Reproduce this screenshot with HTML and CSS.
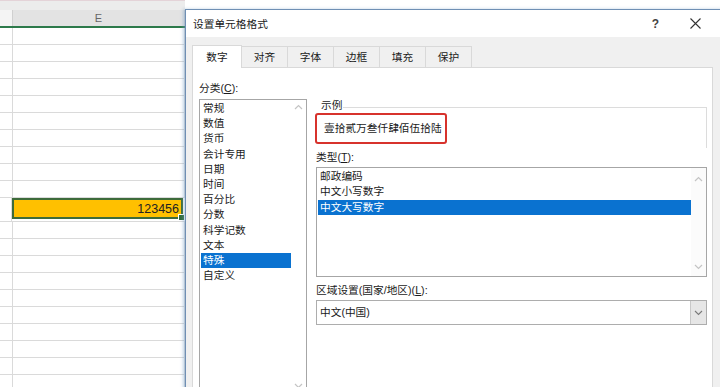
FILE: index.html
```html
<!DOCTYPE html>
<html lang="zh-CN">
<head>
  <meta charset="utf-8" />
  <title>设置单元格格式</title>
  <link rel="stylesheet" href="styles.css">
</head>
<body>
  <div id="screen">
    <!-- sheet behind the dialog -->
    <div class="sheet">
      <div class="ribbon-edge"></div>
      <div class="col-head">
        <div class="head-d"></div>
        <div class="head-e">E</div>
      </div>
      <div class="row"></div><div class="row"></div><div class="row"></div><div class="row"></div><div class="row"></div>
      <div class="row"></div><div class="row"></div><div class="row"></div><div class="row"></div><div class="row"></div>
      <div class="row row-active">
        <div class="cell-d"></div>
        <div class="cell-sel">123456<span class="fill-handle"></span></div>
      </div>
      <div class="row"></div><div class="row"></div><div class="row"></div><div class="row"></div><div class="row"></div>
      <div class="row"></div><div class="row"></div><div class="row"></div><div class="row"></div><div class="row"></div>
    </div>

    <!-- format cells dialog -->
    <div class="dialog">
      <div class="titlebar">
        <span class="title">设置单元格格式</span>
        <span class="help">?</span>
        <svg class="close" width="11" height="11" viewBox="0 0 11 11"><path d="M0.5 0.5 L10.5 10.5 M10.5 0.5 L0.5 10.5" stroke="#333" stroke-width="1.1" fill="none"/></svg>
      </div>
      <div class="dialog-body">
        <ul class="tabs">
          <li class="tab active">数字</li>
          <li class="tab">对齐</li>
          <li class="tab">字体</li>
          <li class="tab">边框</li>
          <li class="tab">填充</li>
          <li class="tab">保护</li>
        </ul>
        <div class="panel">
          <div class="col-left">
            <div class="label">分类(<u>C</u>):</div>
            <div class="listbox cat-list">
              <ul class="items">
                <li>常规</li>
                <li>数值</li>
                <li>货币</li>
                <li>会计专用</li>
                <li>日期</li>
                <li>时间</li>
                <li>百分比</li>
                <li>分数</li>
                <li>科学记数</li>
                <li>文本</li>
                <li class="selected">特殊</li>
                <li>自定义</li>
              </ul>
              <div class="scroll">
                <svg width="9" height="6" viewBox="0 0 9 6"><polyline points="1,5 4.5,1.5 8,5" stroke="#c4c4c4" stroke-width="1.2" fill="none"/></svg>
                <svg width="9" height="6" viewBox="0 0 9 6"><polyline points="1,1 4.5,4.5 8,1" stroke="#c4c4c4" stroke-width="1.2" fill="none"/></svg>
              </div>
            </div>
          </div>
          <div class="col-right">
            <div class="sample">
              <div class="legend">示例</div>
              <div class="sample-box">壹拾贰万叁仟肆佰伍拾陆</div>
            </div>
            <div class="label type-label">类型(<u>T</u>):</div>
            <div class="listbox type-list">
              <ul class="items">
                <li>邮政编码</li>
                <li>中文小写数字</li>
                <li class="selected">中文大写数字</li>
              </ul>
              <div class="scroll">
                <svg width="9" height="6" viewBox="0 0 9 6"><polyline points="1,5 4.5,1.5 8,5" stroke="#c4c4c4" stroke-width="1.2" fill="none"/></svg>
                <svg width="9" height="6" viewBox="0 0 9 6"><polyline points="1,1 4.5,4.5 8,1" stroke="#c4c4c4" stroke-width="1.2" fill="none"/></svg>
              </div>
            </div>
            <div class="label locale-label">区域设置(国家/地区)(<u>L</u>):</div>
            <div class="select">
              <span class="select-value">中文(中国)</span>
              <span class="select-btn">
                <svg width="9" height="6" viewBox="0 0 9 6"><polyline points="1,1 4.5,4.5 8,1" stroke="#7a7a7a" stroke-width="1.1" fill="none"/></svg>
              </span>
            </div>
          </div>
        </div>
      </div>
    </div>
  </div>
</body>
</html>
```

FILE: styles.css
```css
html, body {
  margin: 0;
  padding: 0;
  background: #ffffff;
}
body {
  font-family: "Liberation Sans", "Noto Sans CJK SC", sans-serif;
  color: #1a1a1a;
}
#screen {
  position: relative;
  width: 720px;
  height: 387px;
  overflow: hidden;
}

/* sheet */
.sheet {
  width: 185px;
}
.ribbon-edge {
  height: 10px;
  background: #ececec;
  border-top: 1px solid #e4d3d8;
  box-sizing: border-box;
}
.col-head {
  display: flex;
  height: 18px;
  box-sizing: border-box;
  border-bottom: 2px solid #2d7a4b;
}
.head-d {
  width: 12px;
  background: #f4f4f4;
  border-right: 1px solid #d0d0d0;
}
.head-e {
  width: 171px;
  background: #e3e3e3;
  border-right: 1px solid #cfcfcf;
  text-align: center;
  font-size: 11px;
  line-height: 16px;
  color: #666;
}
.row {
  position: relative;
  height: 17px;
  box-sizing: border-box;
  border-bottom: 1px solid #dadada;
  display: flex;
}
.row::before {
  content: "";
  width: 12px;
  border-right: 1px solid #dadada;
}
.row::after {
  content: "";
  width: 171px;
  border-right: 1px solid #dadada;
}
.row-active {
  height: 24px;
}
.row-active::before, .row-active::after {
  display: none;
}
.cell-d {
  width: 11px;
  border-right: 1px solid #dadada;
}
.cell-sel {
  position: relative;
  width: 171px;
  height: 21px;
  box-sizing: border-box;
  background: #ffc000;
  border: 2px solid #3d6b3a;
  text-align: right;
  font-size: 12.5px;
  line-height: 18px;
  padding-right: 2px;
  color: #222;
}
.fill-handle {
  position: absolute;
  right: -4px;
  bottom: -4px;
  width: 5px;
  height: 5px;
  background: #2f6b3c;
  border: 1px solid #fff;
}

/* dialog */
.dialog {
  position: absolute;
  left: 185px;
  top: 9px;
  width: 545px;
  height: 400px;
  border: 1px solid #6f8fb4;
  box-shadow: -2px 0 3px rgba(120, 160, 200, 0.45);
  background: #f0f0f0;
  font-size: 10.7px;
}
.titlebar {
  height: 27px;
  background: #ffffff;
  display: flex;
  align-items: center;
  padding-left: 7px;
}
.title {
  flex: 1;
  line-height: 15px;
  margin-top: 1px;
}
.help {
  font-size: 12px;
  font-weight: bold;
  color: #444;
  margin-right: 31px;
}
.close {
  margin-right: 30px;
}
.dialog-body {
  padding: 8px 0 0 6px;
}
.tabs {
  list-style: none;
  margin: 0;
  padding: 0;
  display: flex;
  height: 22px;
  position: relative;
  z-index: 2;
}
.tab {
  width: 47px;
  height: 21px;
  margin-top: 1px;
  box-sizing: border-box;
  border: 1px solid #d9d9d9;
  border-bottom: none;
  margin-left: -1px;
  text-align: center;
  line-height: 20px;
  background: #f0f0f0;
}
.tab.active {
  width: 50px;
  height: 23px;
  margin-top: 0;
  margin-left: 0;
  background: #ffffff;
  line-height: 22px;
}
.panel {
  width: 521px;
  height: 330px;
  box-sizing: border-box;
  background: #ffffff;
  border: 1px solid #d9d9d9;
  display: grid;
  grid-template-columns: 108px 391px;
  column-gap: 9px;
  padding: 13px 0 0 6px;
}
.label {
  line-height: 15px;
}
.listbox {
  display: flex;
  border: 1px solid #a6a6a6;
  background: #ffffff;
}
.items {
  list-style: none;
  margin: 0;
  flex: 1;
}
.items li {
  padding-left: 2px;
}
.items li.selected {
  background: #0a72d0;
  color: #ffffff;
}
.scroll {
  width: 15px;
  display: flex;
  flex-direction: column;
  align-items: center;
  justify-content: space-between;
}
.cat-list {
  margin-top: 3px;
  height: 300px;
}
.cat-list .items {
  padding: 1px 0 0 1px;
}
.cat-list .items li {
  line-height: 15.2px;
}
.cat-list .scroll {
  padding: 4px 0 0;
  height: 285px;
}
.col-right {
  padding-top: 16px;
}
.sample {
  position: relative;
}
.sample::after {
  content: "";
  position: absolute;
  left: 27px;
  right: 0;
  top: 10px;
  height: 40px;
  border-top: 1px solid #dcdcdc;
  border-right: 1px solid #dcdcdc;
}
.legend {
  line-height: 16px;
  padding-left: 5px;
}
.sample-box {
  position: relative;
  z-index: 1;
  width: 132px;
  height: 31px;
  box-sizing: border-box;
  margin-left: -1px;
  border: 2px solid #d7322c;
  border-radius: 3px;
  line-height: 27px;
  padding-left: 7px;
  background: #ffffff;
}
.type-label {
  margin-top: 5.5px;
}
.type-list {
  margin-top: 2.5px;
  height: 110px;
  box-sizing: border-box;
}
.type-list .items {
  padding: 0.5px 0 0 1px;
}
.type-list .items li {
  line-height: 15.5px;
}
.type-list .scroll {
  padding: 8px 0 6px;
  background: #fbfbfb;
}
.locale-label {
  margin-top: 5.5px;
}
.select {
  margin-top: 2.5px;
  height: 25px;
  box-sizing: border-box;
  border: 1px solid #adadad;
  display: flex;
}
.select-value {
  flex: 1;
  line-height: 23px;
  padding-left: 3px;
}
.select-btn {
  width: 15px;
  background: #e6e6e6;
  border-left: 1px solid #c8c8c8;
  display: flex;
  align-items: center;
  justify-content: center;
}
```
